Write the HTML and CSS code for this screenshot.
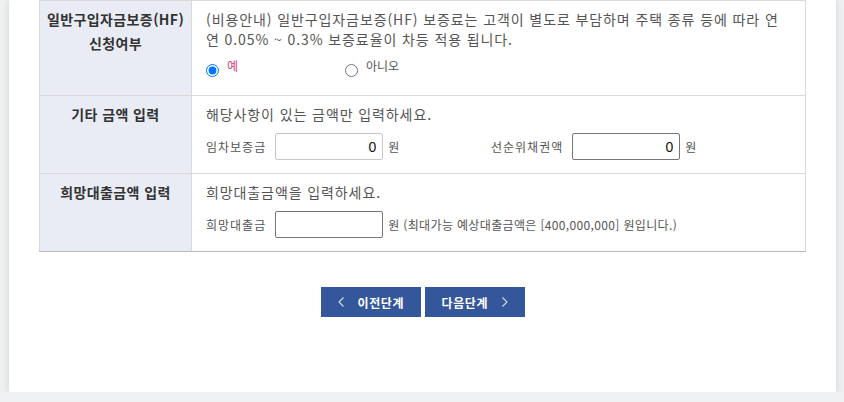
FILE: index.html
```html
<!DOCTYPE html>
<html lang="ko">
<head>
<meta charset="utf-8">
<link rel="stylesheet" href="styles.css">
</head>
<body>
<div class="card">
  <table class="form-table">
    <tr class="row-1">
      <th><span class="th-text">일반구입자금보증(HF)<br>신청여부</span></th>
      <td>
        <p class="desc">(비용안내) 일반구입자금보증(HF) 보증료는 고객이 별도로 부담하며 주택 종류 등에 따라 연<br>연 0.05% ~ 0.3% 보증료율이 차등 적용 됩니다.</p>
        <div class="radio-row">
          <label class="radio-item"><input type="radio" name="hf" checked><span class="radio-label checked">예</span></label>
          <label class="radio-item"><input type="radio" name="hf"><span class="radio-label">아니오</span></label>
        </div>
      </td>
    </tr>
    <tr>
      <th><span class="th-text">기타 금액 입력</span></th>
      <td>
        <p class="desc">해당사항이 있는 금액만 입력하세요.</p>
        <div class="input-row">
          <div class="field">
            <span class="field-label">임차보증금</span>
            <input class="amount light" type="text" value="0">
            <span class="unit">원</span>
          </div>
          <div class="field">
            <span class="field-label">선순위채권액</span>
            <input class="amount dark" type="text" value="0">
            <span class="unit">원</span>
          </div>
        </div>
      </td>
    </tr>
    <tr class="last">
      <th><span class="th-text">희망대출금액 입력</span></th>
      <td>
        <p class="desc">희망대출금액을 입력하세요.</p>
        <div class="input-row">
          <div class="field">
            <span class="field-label">희망대출금</span>
            <input class="amount dark" type="text" value="">
            <span class="unit">원 (최대가능 예상대출금액은 [400,000,000] 원입니다.)</span>
          </div>
        </div>
      </td>
    </tr>
  </table>
  <div class="btn-area">
    <button class="btn prev" type="button">
      <svg width="6" height="10" viewBox="0 0 6 10"><path d="M5.5 0.5 L1 5 L5.5 9.5" fill="none" stroke="#d7deeb" stroke-width="1.1"/></svg>
      <span>이전단계</span>
    </button>
    <button class="btn next" type="button">
      <span>다음단계</span>
      <svg width="6" height="10" viewBox="0 0 6 10"><path d="M0.5 0.5 L5 5 L0.5 9.5" fill="none" stroke="#d7deeb" stroke-width="1.1"/></svg>
    </button>
  </div>
</div>
</body>
</html>
```

FILE: styles.css
```css
* { box-sizing: border-box; }
html, body {
  margin: 0;
  padding: 0;
  background: #eff0f2;
  font-family: "Noto Sans CJK KR", "Noto Sans", sans-serif;
  color: #555;
}
.card {
  margin: 0 8px 0 9px;
  width: 827px;
  background: #fff;
  padding: 0 30px 75px 30px;
  box-shadow: 0 1px 8px rgba(0, 0, 0, 0.13);
}
.form-table {
  width: 767px;
  border-collapse: collapse;
  table-layout: fixed;
}
.form-table th,
.form-table td {
  border: 1px solid #dadada;
  vertical-align: top;
}
.form-table tr.last th,
.form-table tr.last td {
  border-bottom-color: #b9b9b9;
}
.form-table th {
  width: 152px;
  background: #e9ecf5;
  padding: 6px 2px 0 2px;
  text-align: center;
  font-size: 14px;
  font-weight: bold;
  letter-spacing: 0.4px;
  line-height: 24px;
  color: #333;
}
.form-table td {
  padding: 8px 14px 13px 14px;
}
.desc {
  margin: 0;
  font-size: 14px;
  line-height: 20px;
  letter-spacing: 0.9px;
  color: #555;
}
.radio-row {
  display: flex;
  margin-top: 9px;
  height: 24px;
}
.radio-item {
  display: flex;
  align-items: flex-start;
  width: 139px;
}
.radio-item input {
  margin: 6px 0 0 0;
  width: 13px;
  height: 13px;
}
.radio-label {
  margin-left: 8px;
  font-size: 12px;
  line-height: 16px;
  color: #555;
}
.radio-label.checked {
  color: #d0408a;
}
.input-row {
  display: flex;
  margin-top: 9px;
  height: 27px;
}
.field {
  display: flex;
  align-items: center;
  width: 285px;
  flex: none;
  white-space: nowrap;
}
.field-label {
  font-size: 12px;
  letter-spacing: 1px;
  color: #555;
  margin-right: 9px;
}
.amount {
  width: 108px;
  height: 27px;
  margin: 0;
  padding: 0 6px;
  text-align: right;
  font-family: "Liberation Sans", Arial, sans-serif;
  font-size: 14px;
  color: #111;
  background: #fff;
  border-radius: 2px;
}
.amount.light { border: 1px solid #c7c7c7; }
.amount.dark { border: 1px solid #767676; }
.unit {
  margin-left: 5px;
  font-size: 12px;
  letter-spacing: 0.35px;
  color: #555;
}
.btn-area {
  display: flex;
  justify-content: center;
  gap: 4px;
  margin-top: 35px;
}
.btn {
  display: flex;
  align-items: center;
  width: 100px;
  height: 30px;
  border: 0;
  background: #34569a;
  color: #fff;
  font-family: "Noto Sans CJK KR", sans-serif;
  font-size: 12px;
  font-weight: bold;
  letter-spacing: 0.6px;
  cursor: pointer;
}
.btn.prev { padding: 0 0 0 17px; }
.btn.prev span { margin-left: 14px; }
.btn.next { padding: 0 0 0 17px; }
.btn.next span { margin-right: 14px; }
```
